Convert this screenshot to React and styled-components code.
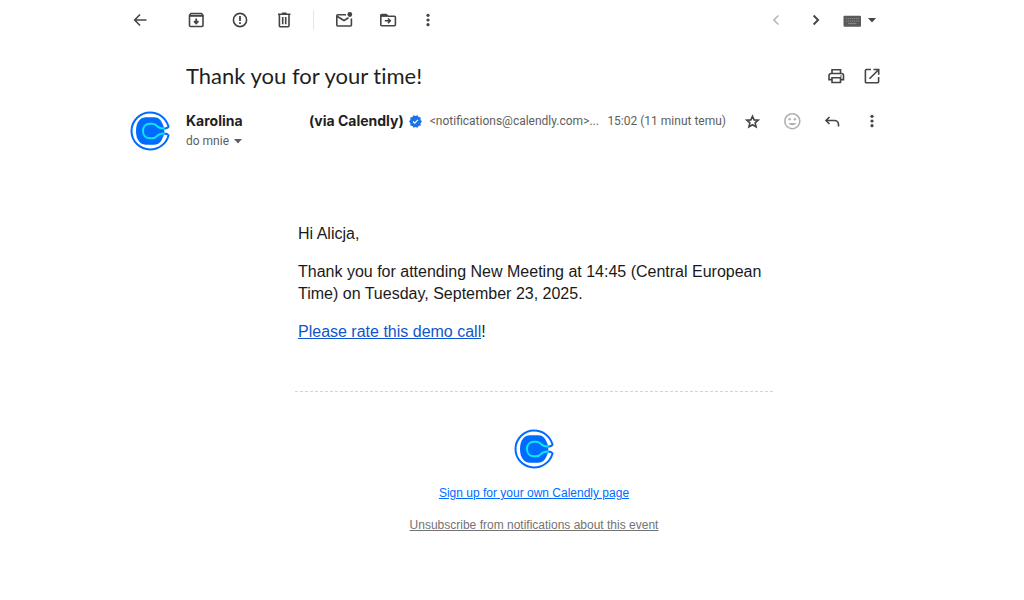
import React from "react";
import styled, { createGlobalStyle } from "styled-components";

const Icon = ({ size = 20, width, children }) => (
  <svg
    width={width || size}
    height={size}
    viewBox={`0 0 ${width || size} ${size}`}
    fill="none"
    stroke="currentColor"
    strokeWidth="1.6"
    aria-hidden="true"
  >
    {children}
  </svg>
);

const BackIcon = () => (
  <Icon>
    <path d="M16.5 10H5M10 4.500L4.700 10l5.300 5.500" />
  </Icon>
);

const ArchiveIcon = () => (
  <Icon>
    <path d="M3.500 5.200L5 3.500h10.500L17 5.200v10.300a1 1 0 0 1-1 1H4.500a1 1 0 0 1-1-1z" />
    <path d="M3.500 5.800H17" strokeWidth="2" />
    <path d="M10.200 8.500v4M8 11.200l2.200 2.200 2.200-2.200" strokeWidth="1.800" />
  </Icon>
);

const SpamIcon = () => (
  <Icon>
    <circle cx="10" cy="10" r="6.600" />
    <path d="M10 6v5M10 12.300v1.700" strokeWidth="1.800" />
  </Icon>
);

const TrashIcon = () => (
  <Icon>
    <path d="M4 4.200h12.500M8 3.300h4.500" />
    <path d="M5.400 4.500v11.200a1 1 0 0 0 1 1h7.600a1 1 0 0 0 1-1V4.500" />
    <path d="M8.700 7v7.200M11.700 7v7.200" />
  </Icon>
);

const UnreadIcon = () => (
  <Icon>
    <path d="M12 4.800H3.800a1 1 0 0 0-1 1V15a1 1 0 0 0 1 1h12.600a1 1 0 0 0 1-1V8.500" />
    <path d="M3 6.200l7 4.300 4.500-2.700" />
    <circle cx="15.800" cy="4.500" r="2.400" fill="currentColor" stroke="none" />
  </Icon>
);

const MoveIcon = () => (
  <Icon>
    <path d="M2.800 5.500a1 1 0 0 1 1-1h4.500L10 6.300h6.400a1 1 0 0 1 1 1v7.400a1 1 0 0 1-1 1H3.800a1 1 0 0 1-1-1z" />
    <path d="M3 5.700h6" strokeWidth="2.400" />
    <path d="M6.800 10.800h5M10 8.500l2.300 2.300-2.300 2.300" />
  </Icon>
);

const MoreIcon = () => (
  <Icon width={12}>
    <g fill="currentColor" stroke="none">
      <circle cx="6" cy="5.300" r="1.600" />
      <circle cx="6" cy="10" r="1.600" />
      <circle cx="6" cy="14.700" r="1.600" />
    </g>
  </Icon>
);

const PrevIcon = () => (
  <Icon>
    <path d="M12.400 5.500L7.900 10l4.500 4.500" />
  </Icon>
);

const NextIcon = () => (
  <Icon>
    <path d="M7.600 5.500l4.500 4.500-4.500 4.500" strokeWidth="1.900" />
  </Icon>
);

const KeyboardIcon = () => (
  <Icon>
    <rect x="1.500" y="5.800" width="17.500" height="11" rx="1" fill="#5a5a5a" stroke="none" />
    <path
      d="M4 8.500h13M4 11h13"
      stroke="#8c8c8c"
      strokeWidth="1.200"
      strokeDasharray="1.200 0.800"
    />
    <path d="M6 13.500h8.500" stroke="#858585" strokeWidth="1.200" />
  </Icon>
);

const CaretIcon = () => (
  <Icon size={10}>
    <path d="M1 3h8L5 7.500z" fill="currentColor" stroke="none" />
  </Icon>
);

const PrintIcon = () => (
  <Icon>
    <path d="M6 7V3.800h8.500V7" />
    <path d="M5.800 13.600H3V9.500a2 2 0 0 1 2-2h10.500a2 2 0 0 1 2 2v4.100h-2.800" />
    <path d="M6 11.700h8.500v4.800H6z" />
    <circle cx="15" cy="10" r="0.800" fill="currentColor" stroke="none" />
  </Icon>
);

const NewWindowIcon = () => (
  <Icon>
    <path d="M9 3.500H4.400a1 1 0 0 0-1 1v11.200a1 1 0 0 0 1 1h11.200a1 1 0 0 0 1-1V11" />
    <path d="M11.500 3.500h5.200v5.200M16.500 3.700l-9 9" />
  </Icon>
);

const StarIcon = () => (
  <Icon>
    <path d="M10.500 5.200l1.600 3.700 4.100.3-3.100 2.700 1 4-3.600-2.200-3.600 2.200 1-4-3.100-2.700 4.100-.3z" />
  </Icon>
);

const SmileIcon = () => (
  <Icon>
    <circle cx="10.300" cy="10.200" r="7.500" />
    <path d="M6.500 12c1.400 2.900 6.200 2.900 7.600 0z" fill="currentColor" stroke="none" />
    <circle cx="7.700" cy="8.300" r="1.200" fill="currentColor" stroke="none" />
    <circle cx="12.900" cy="8.300" r="1.200" fill="currentColor" stroke="none" />
  </Icon>
);

const ReplyIcon = () => (
  <Icon>
    <path d="M7.500 6L4 9.500 7.500 13M4.200 9.500h8.300a4 4 0 0 1 4 4v2" />
  </Icon>
);

const VerifiedIcon = () => (
  <svg width="13" height="13" viewBox="0 0 24 24" role="img" aria-label="Verified">
    <path
      fill="#1a73e8"
      d="M24 12l-2.700-3.100.4-4.100-4-.9L15.600.4 12 2 8.400.4 6.300 3.900l-4 .9.400 4.100L0 12l2.700 3.100-.4 4.100 4 .9 2.100 3.500L12 22l3.600 1.600 2.100-3.500 4-.9-.4-4.100z"
    />
    <path d="M7.500 12l3 3 6-6" fill="none" stroke="#fff" strokeWidth="2.200" />
  </svg>
);

const CalendlyLogo = () => (
  <svg width="40" height="40" viewBox="0 0 40 40" role="img" aria-label="Calendly">
    <path
      d="M16 6.300h8c2.800 0 4.600.7 6.300 2.700 1.500 1.800 2.400 3.900 3.200 6 1 3 1 7 0 10-.8 2.100-1.700 4.200-3.200 6-1.700 2-3.500 2.700-6.300 2.700h-8c-2.800 0-4.800-.8-6.500-2.700C7 28.200 6 24.500 6 20s1-8.200 3.500-11C11.200 7.100 13.200 6.300 16 6.300z"
      fill="#006bff"
    />
    <path
      d="M33.500 17.600c2.800-.2 4.600-.8 5-2C36.300 7.400 29 1.500 20 1.500 9.800 1.500 1.500 9.800 1.500 20S9.800 38.500 20 38.500c9 0 16.300-5.900 18.500-14.100-.4-1.200-2.200-1.800-5-2"
      fill="none"
      stroke="#006bff"
      strokeWidth="2"
    />
    <path
      d="M34.500 17.600c-4 .2-5.600-.4-7.300-2.400-1.500-1.800-2.700-2.500-5.200-2.500h-2c-4.300 0-7 3-7 7.300s2.700 7.300 7 7.300h2c2.500 0 3.700-.7 5.200-2.500 1.700-2 3.300-2.600 7.300-2.400"
      fill="none"
      stroke="#0ae8f0"
      strokeWidth="2"
    />
  </svg>
);

function App() {
  return (
    <Page>
      <GlobalStyle />
      <Toolbar>
        <BackSlot>
          <IconButton aria-label="Back">
            <BackIcon />
          </IconButton>
        </BackSlot>
        <Actions $gap={24}>
          <IconButton aria-label="Archive">
            <ArchiveIcon />
          </IconButton>
          <IconButton aria-label="Report spam">
            <SpamIcon />
          </IconButton>
          <IconButton aria-label="Delete">
            <TrashIcon />
          </IconButton>
        </Actions>
        <Divider />
        <Actions $gap={24}>
          <IconButton aria-label="Mark as unread">
            <UnreadIcon />
          </IconButton>
          <IconButton aria-label="Move to">
            <MoveIcon />
          </IconButton>
          <IconButton aria-label="More" $width={12}>
            <MoreIcon />
          </IconButton>
        </Actions>
        <Pager>
          <IconButton aria-label="Newer" $color="#b4b4b4">
            <PrevIcon />
          </IconButton>
          <IconButton aria-label="Older">
            <NextIcon />
          </IconButton>
          <InputTools aria-label="Input tools">
            <KeyboardIcon />
            <CaretIcon />
          </InputTools>
        </Pager>
      </Toolbar>

      <SubjectRow>
        <Subject>Thank you for your time!</Subject>
        <Actions $gap={16}>
          <IconButton aria-label="Print">
            <PrintIcon />
          </IconButton>
          <IconButton aria-label="Open in new window">
            <NewWindowIcon />
          </IconButton>
        </Actions>
      </SubjectRow>

      <MessageHeader>
        <Avatar>
          <CalendlyLogo />
        </Avatar>
        <Details>
          <SenderRow>
            <FirstName>Karolina</FirstName>
            <Via>(via Calendly)</Via>
            <VerifiedIcon />
            <Address>&lt;notifications@calendly.com&gt;...</Address>
            <Time>15:02 (11 minut temu)</Time>
            <Actions $gap={20}>
              <IconButton aria-label="Star">
                <StarIcon />
              </IconButton>
              <IconButton aria-label="Add reaction" $color="#b0b0b0">
                <SmileIcon />
              </IconButton>
              <IconButton aria-label="Reply">
                <ReplyIcon />
              </IconButton>
              <IconButton aria-label="More options">
                <MoreIcon />
              </IconButton>
            </Actions>
          </SenderRow>
          <Recipient>
            do mnie
            <CaretIcon />
          </Recipient>
        </Details>
      </MessageHeader>

      <Message>
        <Body>
          <Text>
            <p>Hi Alicja,</p>
            <p>
              Thank you for attending New Meeting at 14:45 (Central European
              Time) on Tuesday, September 23, 2025.
            </p>
            <p>
              <BodyLink href="#rate">Please rate this demo call</BodyLink>!
            </p>
          </Text>
          <Footer>
            <CalendlyLogo />
            <FooterLink href="#signup" $color="#006bff">
              Sign up for your own Calendly page
            </FooterLink>
            <FooterLink href="#unsubscribe" $color="#737373">
              Unsubscribe from notifications about this event
            </FooterLink>
          </Footer>
        </Body>
      </Message>
    </Page>
  );
}

const GlobalStyle = createGlobalStyle`
  * {
    box-sizing: border-box;
  }

  body {
    margin: 0;
    background: #fff;
    color: #1f1f1f;
  }

  svg {
    display: block;
    flex-shrink: 0;
  }
`;

const Page = styled.main`
  padding: 0 142px 0 130px;
`;

const Toolbar = styled.div`
  display: flex;
  align-items: center;
  height: 40px;
`;

const BackSlot = styled.div`
  width: 56px;
`;

const Actions = styled.div`
  display: flex;
  align-items: center;
  flex-shrink: 0;
  gap: ${(props) => props.$gap}px;
`;

const IconButton = styled.button`
  display: flex;
  justify-content: center;
  min-width: ${(props) => props.$width || 20}px;
  padding: 0;
  border: 0;
  background: none;
  color: ${(props) => props.$color || "#444"};
  cursor: pointer;
`;

const Divider = styled.span`
  width: 1px;
  height: 20px;
  margin: 0 20px 0 19px;
  background: #e6e6e6;
`;

const Pager = styled.div`
  display: flex;
  align-items: center;
  gap: 20px;
  margin-left: auto;
`;

const InputTools = styled(IconButton)`
  align-items: center;
  gap: 5px;
  margin-left: -4px;
  padding-right: 5px;
`;

const SubjectRow = styled.div`
  display: flex;
  align-items: center;
  justify-content: space-between;
  margin: 20px 0 16px;
  padding: 0 0 3px 56px;
`;

const Subject = styled.h1`
  margin: 0;
  font: 400 22px/32px Lato, sans-serif;
  font-variant-ligatures: none;
`;

const MessageHeader = styled.header`
  display: flex;
`;

const Avatar = styled.div`
  width: 56px;
`;

const Details = styled.div`
  flex: 1;
`;

const SenderRow = styled.div`
  display: flex;
  align-items: center;
  height: 20px;
  white-space: nowrap;
`;

const FirstName = styled.span`
  width: 123px;
  font: 700 14px/20px Inter, sans-serif;
`;

const Via = styled.span`
  margin-right: 5px;
  font: 700 14px/20px Inter, sans-serif;
`;

const Address = styled.span`
  margin-left: 8px;
  color: #5e5e5e;
  font: 12px/20px Roboto, sans-serif;
`;

const Time = styled.span`
  margin: 0 16px 0 auto;
  color: #5e5e5e;
  font: 12px/20px Roboto, sans-serif;
`;

const Recipient = styled.button`
  display: flex;
  align-items: center;
  gap: 4px;
  padding: 0;
  border: 0;
  background: none;
  color: #5e5e5e;
  font: 12px/20px Roboto, sans-serif;
`;

const Message = styled.div`
  padding: 72px 0 40px 56px;
`;

const Body = styled.article`
  max-width: 478px;
  margin: 0 auto;
  font-family: "Liberation Sans", Arial, sans-serif;
`;

const Text = styled.div`
  padding: 0 3px 48px;
  color: #1a1a1a;
  font-size: 16px;
  line-height: 22px;

  p {
    margin: 0 0 16px;
  }

  p:last-child {
    margin: 0;
  }
`;

const BodyLink = styled.a`
  color: #1155cc;
`;

const Footer = styled.footer`
  display: flex;
  flex-direction: column;
  align-items: center;
  gap: 16px;
  padding-top: 37px;
  border-top: 1px dashed #d4d4d4;
`;

const FooterLink = styled.a`
  color: ${(props) => props.$color};
  font-size: 12px;
  line-height: 16px;
`;

export default App;
